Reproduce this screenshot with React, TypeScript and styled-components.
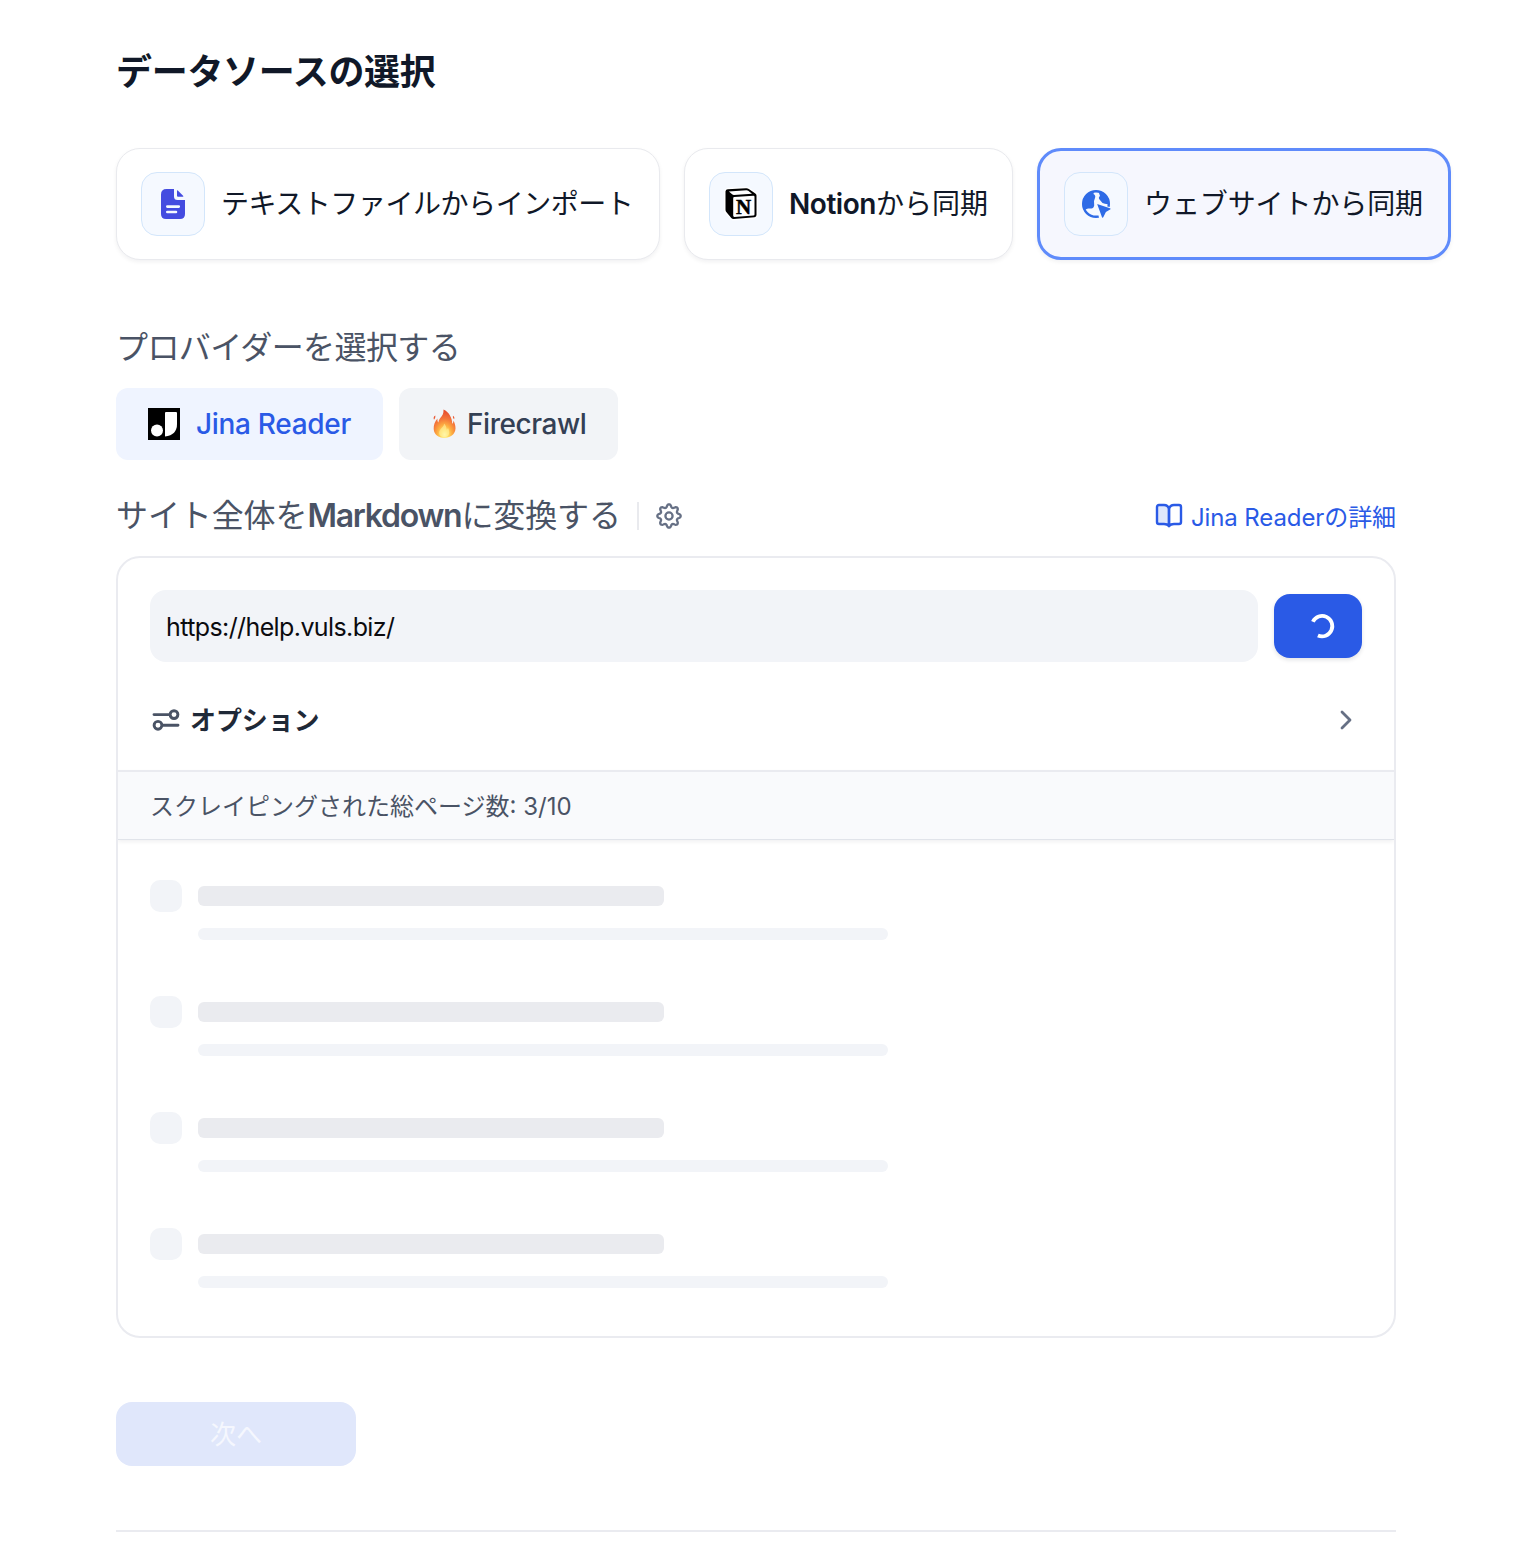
import React from "react";
import styled, { createGlobalStyle } from "styled-components";

const GlobalStyle = createGlobalStyle`
  * { box-sizing: border-box; }
  body {
    margin: 0;
    background: #fff;
    font-family: Inter, "Noto Sans CJK JP", sans-serif;
    overflow: hidden;
  }
  button, input { font: inherit; border: 0; }
`;

const Page = styled.main`
  width: 1524px;
  height: 1566px;
  padding: 48px 0 0 116px;
  background: #fff;
`;
const Content = styled.div`
  width: 1280px;
`;
const Label = styled.span<{ $track?: number; $shift?: number }>`
  display: block;
  white-space: nowrap;
  letter-spacing: ${(p) => p.$track ?? 0}px;
  transform: translateY(${(p) => p.$shift ?? 0}px);
`;
const Latin = styled.span<{ $track?: number; $weight?: number }>`
  letter-spacing: ${(p) => p.$track ?? 0}px;
  font-weight: ${(p) => p.$weight ?? 500};
`;
const Title = styled.h1`
  margin: 0;
  height: 48px;
  line-height: 48px;
  font-size: 36px;
  font-weight: 700;
  color: #101828;
`;
const Sources = styled.div`
  display: flex;
  gap: 24px;
  margin-top: 52px;
`;
const SourceCard = styled.div<{ $width: number; $active?: boolean }>`
  display: flex;
  flex: none;
  align-items: center;
  gap: 16px;
  width: ${(p) => p.$width}px;
  height: 112px;
  padding-left: 24px;
  border-radius: 24px;
  border: ${(p) => (p.$active ? "3px solid #5f8bfb" : "1px solid #e9eaee")};
  background: ${(p) => (p.$active ? "#f6f7fe" : "#fff")};
  box-shadow: 0 2px 4px rgba(16, 24, 40, 0.06);
  font-size: 28px;
  font-weight: 400;
  color: #101828;
`;
const IconTile = styled.div`
  display: flex;
  flex: none;
  align-items: center;
  justify-content: center;
  width: 64px;
  height: 64px;
  border: 1px solid #d3e6fb;
  border-radius: 16px;
  background: #f5f9ff;
`;
const SectionTitle = styled.h2`
  margin: 0;
  height: 48px;
  line-height: 48px;
  font-size: 32px;
  font-weight: 400;
  color: #4a5365;
`;
const ProviderSection = styled.section`
  margin-top: 64px;
`;
const Providers = styled.div`
  display: flex;
  gap: 16px;
  margin-top: 16px;
`;
const Provider = styled.button<{ $width: number; $gap: number; $active?: boolean }>`
  display: flex;
  align-items: center;
  gap: ${(p) => p.$gap}px;
  width: ${(p) => p.$width}px;
  height: 72px;
  padding: 0 0 0 32px;
  border-radius: 12px;
  background: ${(p) => (p.$active ? "#eff4ff" : "#f2f4f7")};
  color: ${(p) => (p.$active ? "#2a5ae6" : "#344054")};
  font-size: 28px;
  font-weight: 500;
`;
const CrawlHeader = styled.header`
  display: flex;
  align-items: center;
  height: 48px;
  margin-top: 32px;
`;
const Divider = styled.i`
  width: 2px;
  height: 28px;
  margin: 0 16px;
  background: #e9eaee;
`;
const DocsLink = styled.a`
  display: flex;
  align-items: center;
  gap: 8px;
  margin-left: auto;
  font-size: 24px;
  color: #2a5ae6;
`;
const Panel = styled.section`
  height: 782px;
  margin-top: 16px;
  border: 2px solid #eaebf0;
  border-radius: 24px;
  overflow: hidden;
`;
const UrlRow = styled.div`
  display: flex;
  align-items: center;
  gap: 16px;
  padding: 32px 32px 0;
`;
const UrlInput = styled.input`
  width: 1108px;
  height: 72px;
  padding: 1px 16px 0;
  border-radius: 16px;
  background: #f2f4f8;
  font-size: 25px;
  letter-spacing: -0.6px;
  color: #0b0b0f;
  outline: none;
`;
const RunButton = styled.button`
  display: flex;
  align-items: center;
  justify-content: center;
  width: 88px;
  height: 64px;
  padding: 0 0 0 8px;
  border-radius: 16px;
  background: #2a5ae6;
  box-shadow: 0 2px 4px rgba(16, 24, 40, 0.12);
`;
const OptionsRow = styled.div`
  display: flex;
  align-items: center;
  gap: 8px;
  height: 48px;
  margin-top: 34px;
  padding: 0 32px;
  font-size: 26px;
  font-weight: 700;
  color: #1f2937;
  > svg:last-child { margin-left: auto; }
`;
const Progress = styled.div`
  height: 70px;
  margin-top: 26px;
  padding-left: 32px;
  line-height: 68px;
  border-top: 2px solid #eaebf0;
  border-bottom: 1px solid #e1e4ea;
  background: #f9fafc;
  box-shadow: 0 2px 4px rgba(16, 24, 40, 0.06);
  font-size: 24px;
  color: #4a5365;
`;
const SkeletonList = styled.div`
  display: grid;
  gap: 56px;
  padding: 40px 32px 0;
`;
const SkeletonRow = styled.div`
  display: flex;
  gap: 16px;
  height: 60px;
`;
const SkeletonCheck = styled.div`
  width: 32px;
  height: 32px;
  border-radius: 10px;
  background: #f2f4f8;
`;
const SkeletonLines = styled.div`
  display: flex;
  flex-direction: column;
  gap: 22px;
  padding-top: 6px;
`;
const SkeletonBar = styled.div<{ $thin?: boolean }>`
  width: ${(p) => (p.$thin ? 690 : 466)}px;
  height: ${(p) => (p.$thin ? 12 : 20)}px;
  border-radius: 6px;
  background: ${(p) => (p.$thin ? "#f2f4f8" : "#eaebef")};
`;
const NextButton = styled.button`
  display: flex;
  align-items: center;
  justify-content: center;
  width: 240px;
  height: 64px;
  margin-top: 64px;
  border-radius: 16px;
  background: #e0e7fb;
  color: #f5f7fe;
  font-size: 26px;
  font-weight: 400;
`;
const BottomRule = styled.div`
  height: 2px;
  margin-top: 64px;
  background: #eaebf0;
`;

const FileIcon = () => (
  <svg width="24" height="30" viewBox="0 0 24 30">
    <path fill="#444ce0" fillRule="evenodd" d="M5.500 0H13v7.500Q13 11 16.500 11H24V25q0 5-5 5H5q-5 0-5-5V5.500Q0 0 5.500 0ZM6.300 16.300a1.300 1.300 0 0 0 0 2.600h11.500a1.300 1.300 0 0 0 0-2.600ZM6.300 21.700a1.300 1.300 0 0 0 0 2.600h8.700a1.300 1.300 0 0 0 0-2.600Z" />
    <path fill="#444ce0" d="M16 1.800q0-1 .8-.3l5.300 5.300q.8.900-.3.900H17q-1 0-1-1Z" />
  </svg>
);
const NotionIcon = () => (
  <svg width="34" height="34" viewBox="-1.500 -1 34 34">
    <path stroke="#fff" strokeWidth="3" strokeLinejoin="round" fill="#fff" d="M0 3.300 2 1.200 22 .4 31 6.200V28l-2 1.700L7 31 0 23.500Z" />
    <path d="M0 3.300Q.3 1.500 2.300 1.300L20.500.3q1.600-.1 2.800.7l6.200 4.200Q31 6.200 31 7.500V27q0 2-2 2.200L8.300 31q-1.600.1-2.500-1L.8 24Q0 23 0 21.500Z" />
    <path fill="#fff" d="m3.400 3.500 17.600-1.200q1 0 1.700.5l3.800 2.900L8.400 6.900q-1 0-1.800-.6ZM7.700 10.200q0-1.100 1.100-1.200L28 7.800q1 0 1 1V26.500q0 1-1.100 1.100L8.800 28.900q-1.100 0-1.100-1.100Z" />
    <text x="18.200" y="25.600" fontFamily="'Liberation Serif', serif" fontWeight="700" fontSize="21" textAnchor="middle" stroke="#000" strokeWidth=".5">N</text>
  </svg>
);
const GlobeIcon = () => (
  <svg width="30" height="30" viewBox="-1 -1 30 30">
    <circle cx="14" cy="14" r="12.800" fill="none" stroke="#2e6be6" strokeWidth="2.400" />
    <path fill="#2e6be6" d="M1.500 10C3 6 7 2 12 1.500l-.5 2.500q2.500 1.500 1.500 4l-1 3 .2 4.500q-.7 3.500-3.500 3L6 18.500 2 20Q-.5 15 1.500 10Z" />
    <path fill="#2e6be6" d="M16.500 1.500C23 2 27.500 8 27.500 14q-4 .500-7-1l-3-3.500q-1.500-2 .5-3.500Z" />
    <path fill="#f5f9ff" d="M14 14 30 17.500V30H17.500Z" />
    <path fill="#2e6be6" d="M15.500 15q-.8-.9.400-.7l12 4q1.200.5.200 1.200l-4.200 2.400-2.500 5.200q-.8 1.400-1.400.1Z" />
  </svg>
);
const JinaIcon = () => (
  <svg width="32" height="32" viewBox="0 0 32 32">
    <path d="M0 0h32v32H0z" />
    <circle cx="9" cy="22.500" r="6" fill="#fff" />
    <path fill="#fff" d="M17 5q0-1 1-1h10q1 0 1 1v11q0 11-12 12.500Z" />
  </svg>
);
const FireIcon = () => (
  <svg width="26" height="30" viewBox="0 0 26 30">
    <defs>
      <radialGradient id="flame" cx="50%" cy="88%" r="80%">
        <stop offset="0" stopColor="#fffbb8" />
        <stop offset=".2" stopColor="#ffe066" />
        <stop offset=".42" stopColor="#fdae42" />
        <stop offset=".7" stopColor="#f4763a" />
        <stop offset="1" stopColor="#e8502f" />
      </radialGradient>
    </defs>
    <path fill="url(#flame)" d="M12.500.5c.3 4-1.200 6.300-3.200 8.500-1 1.200-1.700 2.500-1.800 4.500-1-.7-1.200-2.200-1-4-2.500 2.800-4 6.300-3.800 10.500.3 5.500 4.800 9 10.500 9s11-3.500 11.300-9.500c.1-3-1-5.700-2-8 0 1.500-.4 2.500-1.300 3.300.2-5.800-3.200-11.800-8.700-14.300ZM4.300 6.500C2.600 7.500 2.300 9 3 10.700c1.200-1 1.500-2.500 1.300-4.200ZM22 6.800c-.4 1.500.1 2.700 1.100 3.500.6-1.400.2-2.700-1.100-3.500Z" />
    <path fill="#fff2a0" opacity=".6" d="M13 14.500c.3 3.500-4.500 5-4.800 9-.2 3.300 2.300 4.500 5 4.500s5-1.500 5-4.500c0-1.800-.5-3.200-1.200-4.500l-1.300 2c-.2-2.800-1-5-2.700-6.500Z" />
  </svg>
);

const gearOutline =
  Array.from({ length: 96 }, (_, i) => {
    const angle = (i / 96) * Math.PI * 2;
    const wave = Math.cos(angle * 8);
    const radius = 10.2 + 1.5 * Math.sign(wave) * Math.pow(Math.abs(wave), 0.7);
    return `${i ? "L" : "M"}${(14 + radius * Math.cos(angle)).toFixed(2)} ${(14 + radius * Math.sin(angle)).toFixed(2)}`;
  }).join("") + "Z";

const GearIcon = () => (
  <svg width="28" height="28" viewBox="0 0 28 28" fill="none" stroke="#667085" strokeWidth="2.300" strokeLinejoin="round">
    <path d={gearOutline} />
    <circle cx="14" cy="14" r="3.600" />
  </svg>
);
const BookIcon = () => (
  <svg width="28" height="26" viewBox="0 0 28 26" fill="none" stroke="#2a5ae6" strokeWidth="2.400" strokeLinecap="round" strokeLinejoin="round">
    <path fill="#dfe7fb" d="M14 6Q13 2 9 2H4Q2 2 2 4v15q0 2 2 2h5q3.500 0 5 2Z" />
    <path d="M14 23V6q1-4 5-4h5q2 0 2 2v15q0 2-2 2h-5q-3.500 0-5 2Z" />
  </svg>
);
const SpinnerIcon = () => (
  <svg width="28" height="28" viewBox="0 0 28 28" fill="none" stroke="#fff" strokeWidth="3.800">
    <path d="M4.900 9.700A10.200 10.200 0 1 1 9.900 23.400" />
  </svg>
);
const SlidersIcon = () => (
  <svg width="32" height="32" viewBox="0 0 32 32" fill="none" stroke="#4a5365" strokeWidth="2.900" strokeLinecap="round">
    <path d="M4 10.600h14.500M13.300 21.300H28" />
    <circle cx="24" cy="10.600" r="3.900" />
    <circle cx="8" cy="21.300" r="3.900" />
  </svg>
);
const ChevronIcon = () => (
  <svg width="32" height="32" viewBox="0 0 32 32" fill="none" stroke="#667085" strokeWidth="2.800" strokeLinecap="round" strokeLinejoin="round">
    <path d="m12 8 8 8-8 8" />
  </svg>
);

export default function App() {
  return (
    <>
      <GlobalStyle />
      <Page>
        <Content>
          <Title><Label $track={-0.3}>データソースの選択</Label></Title>
          <Sources>
            <SourceCard $width={544}>
              <IconTile><FileIcon /></IconTile>
              <Label $track={-0.45} $shift={-2}>テキストファイルからインポート</Label>
            </SourceCard>
            <SourceCard $width={329}>
              <IconTile><NotionIcon /></IconTile>
              <Label $shift={-2}><Latin $weight={600} $track={-0.45}>Notion</Latin>から同期</Label>
            </SourceCard>
            <SourceCard $width={414} $active>
              <IconTile><GlobeIcon /></IconTile>
              <Label $track={-0.1} $shift={-2}>ウェブサイトから同期</Label>
            </SourceCard>
          </Sources>
          <ProviderSection>
            <SectionTitle><Label $track={-0.6}>プロバイダーを選択する</Label></SectionTitle>
            <Providers>
              <Provider $width={267} $gap={16} $active><JinaIcon /><Label $track={-0.3}>Jina Reader</Label></Provider>
              <Provider $width={219} $gap={10}><FireIcon /><Label $track={-0.45}>Firecrawl</Label></Provider>
            </Providers>
          </ProviderSection>
          <CrawlHeader>
            <SectionTitle><Label $track={-0.1}>サイト全体を<Latin $weight={600} $track={-1.25}>Markdown</Latin>に変換する</Label></SectionTitle>
            <Divider />
            <GearIcon />
            <DocsLink><BookIcon /><Label $track={-0.1} $shift={-1}>Jina Readerの詳細</Label></DocsLink>
          </CrawlHeader>
          <Panel>
            <UrlRow>
              <UrlInput defaultValue="https://help.vuls.biz/" />
              <RunButton aria-label="実行中"><SpinnerIcon /></RunButton>
            </UrlRow>
            <OptionsRow><SlidersIcon /><Label $shift={-2} $track={-0.1}>オプション</Label><ChevronIcon /></OptionsRow>
            <Progress><Label $shift={1}>スクレイピングされた総ページ数: 3/10</Label></Progress>
            <SkeletonList>
              {[0, 1, 2, 3].map((row) => (
                <SkeletonRow key={row}>
                  <SkeletonCheck />
                  <SkeletonLines><SkeletonBar /><SkeletonBar $thin /></SkeletonLines>
                </SkeletonRow>
              ))}
            </SkeletonList>
          </Panel>
          <NextButton disabled><Label $shift={-2}>次へ</Label></NextButton>
          <BottomRule />
        </Content>
      </Page>
    </>
  );
}
